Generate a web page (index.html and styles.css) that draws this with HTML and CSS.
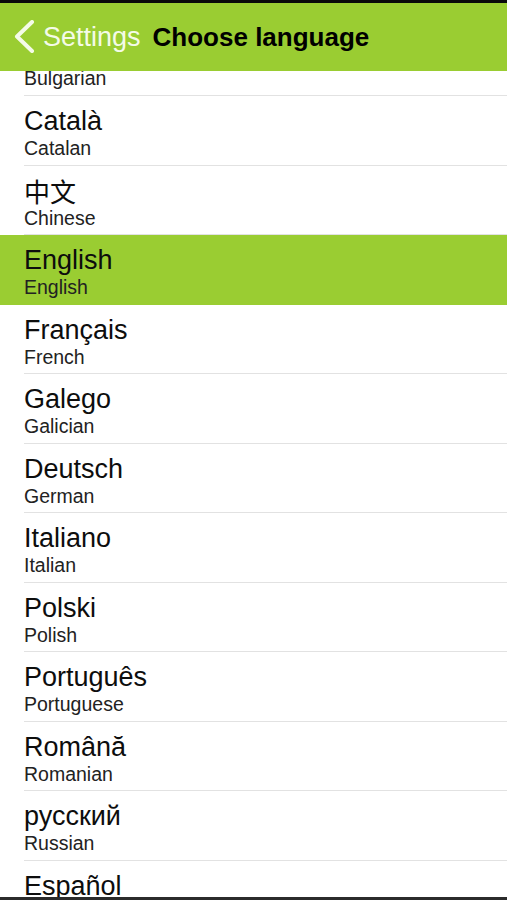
FILE: index.html
```html
<!DOCTYPE html>
<html lang="en">
<head>
    <meta charset="UTF-8">
    <meta name="viewport" content="width=device-width, initial-scale=1.0">
    <title>Choose language</title>
    <link rel="stylesheet" href="styles.css">
</head>
<body>

    <div class="status-strip"></div>
    <div class="header">
        <svg class="back-icon" width="22" height="34" viewBox="0 0 22 34">
            <polyline points="19,2 4,16.5 19,31" fill="none" stroke="#f4fbe8" stroke-width="4" stroke-linecap="round" stroke-linejoin="round"/>
        </svg>
        <span class="back-label">Settings</span>
        <span class="title">Choose language</span>
    </div>

    <div class="list">
        <div class="row first">
            <div class="row-inner">
                <div class="native">Български</div>
                <div class="english">Bulgarian</div>
            </div>
        </div>
        <div class="row">
            <div class="row-inner">
                <div class="native">Català</div>
                <div class="english">Catalan</div>
            </div>
        </div>
        <div class="row">
            <div class="row-inner">
                <div class="native cjk">中文</div>
                <div class="english">Chinese</div>
            </div>
        </div>
        <div class="row selected">
            <div class="row-inner">
                <div class="native">English</div>
                <div class="english">English</div>
            </div>
        </div>
        <div class="row">
            <div class="row-inner">
                <div class="native">Français</div>
                <div class="english">French</div>
            </div>
        </div>
        <div class="row">
            <div class="row-inner">
                <div class="native">Galego</div>
                <div class="english">Galician</div>
            </div>
        </div>
        <div class="row">
            <div class="row-inner">
                <div class="native">Deutsch</div>
                <div class="english">German</div>
            </div>
        </div>
        <div class="row">
            <div class="row-inner">
                <div class="native">Italiano</div>
                <div class="english">Italian</div>
            </div>
        </div>
        <div class="row">
            <div class="row-inner">
                <div class="native">Polski</div>
                <div class="english">Polish</div>
            </div>
        </div>
        <div class="row">
            <div class="row-inner">
                <div class="native">Português</div>
                <div class="english">Portuguese</div>
            </div>
        </div>
        <div class="row">
            <div class="row-inner">
                <div class="native">Română</div>
                <div class="english">Romanian</div>
            </div>
        </div>
        <div class="row">
            <div class="row-inner">
                <div class="native">русский</div>
                <div class="english">Russian</div>
            </div>
        </div>
        <div class="row">
            <div class="row-inner">
                <div class="native">Español</div>
                <div class="english">Spanish</div>
            </div>
        </div>
    </div>
    <div class="bottom-strip"></div>

</body>
</html>
```

FILE: styles.css
```css
body {
    font-family: 'Liberation Sans', Arial, 'Noto Sans CJK SC', sans-serif;
    background: white;
    margin: 0;
    padding: 0;
}
.status-strip {
    height: 3px;
    background: #0a0a0a;
}
.header {
    height: 68px;
    background: #9acd32;
    display: flex;
    align-items: center;
    padding-left: 13px;
    line-height: 68px;
    font-size: 26px;
    white-space: nowrap;
}
.back-icon {
    display: block;
    margin-top: -1px;
}
.back-label {
    color: #f4fbe8;
    font-size: 27px;
    margin-left: 8px;
}
.title {
    color: #000;
    font-weight: bold;
    margin-left: 12px;
}
.list {
    height: 826px;
    overflow: hidden;
}
.row {
    height: 69.55px;
    box-sizing: border-box;
}
.row.first {
    margin-top: -44.55px;
}
.row-inner {
    margin-left: 24px;
    height: 100%;
    box-sizing: border-box;
    padding-top: 10px;
    border-bottom: 1px solid #e2e2e2;
}
.row.selected {
    background: #9acd32;
}
.row.selected .row-inner {
    border-bottom-color: #9acd32;
}
.native {
    font-size: 27px;
    line-height: 30px;
    color: #0d0d0d;
}
.native.cjk {
    font-family: 'Noto Sans CJK SC', sans-serif;
    font-size: 26px;
}
.english {
    font-size: 19.5px;
    line-height: 25px;
    color: #222;
}
.bottom-strip {
    height: 3px;
    background: #2b2b2b;
}
```
